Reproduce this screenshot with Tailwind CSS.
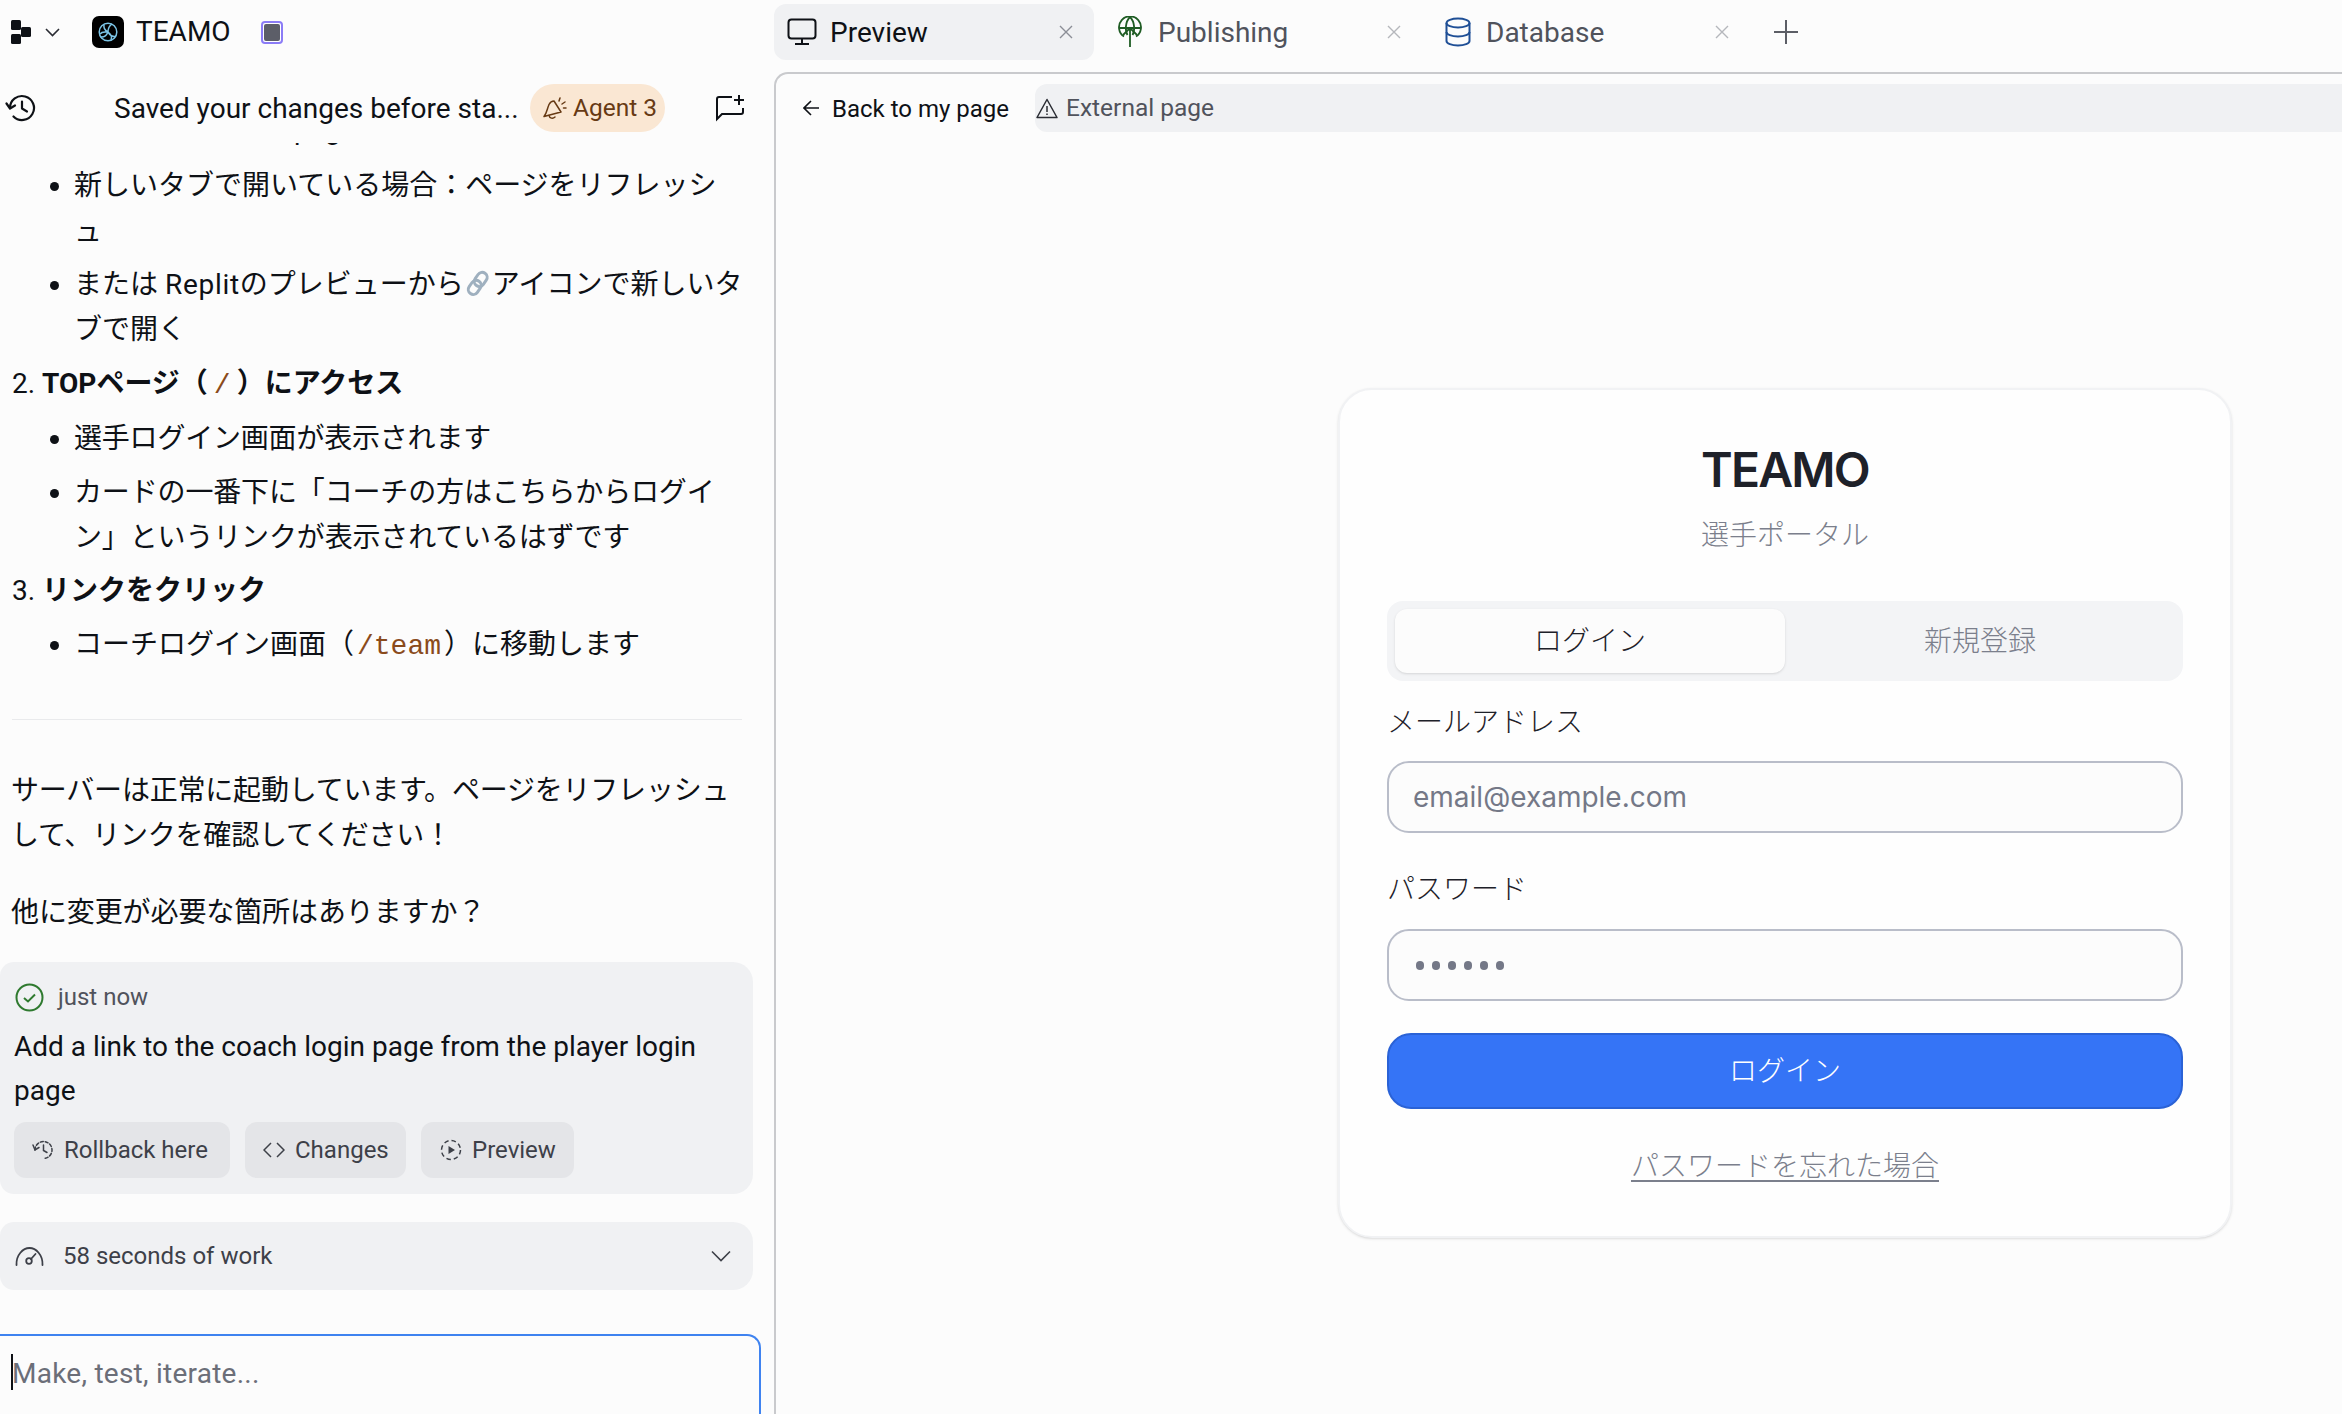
<!doctype html>
<html lang="ja">
<head>
<meta charset="utf-8">
<title>TEAMO</title>
<script src="https://cdn.jsdelivr.net/npm/@tailwindcss/browser@4"></script>
</head>
<body class="bg-[#fcfcfc]">
<div class="flex w-[2342px] h-[1414px] overflow-hidden bg-[#fcfcfc] text-[#0e1116] font-['Roboto','Noto_Sans_CJK_JP',sans-serif] text-[28px]">

  <!-- Left column -->
  <div class="w-[774px] shrink-0 flex flex-col h-full">
    <div class="h-[64px] flex items-center shrink-0">
      <svg class="ml-[11px] w-[20px] h-[24px]" viewBox="0 0 20 24" fill="#0e1116"><rect x="0" y="0" width="10" height="10" rx="1.500"/><rect x="10" y="7" width="10" height="10" rx="1.500"/><rect x="0" y="14" width="10" height="10" rx="1.500"/></svg>
      <svg class="ml-[14px] w-[15px] h-[9px]" viewBox="0 0 15 9" fill="none" stroke="#2a2c33" stroke-width="1.6"><path d="M1 1l6.500 6.500L14 1"/></svg>
      <div class="ml-[32px] w-[32px] h-[32px] rounded-[7px] bg-black flex items-center justify-center">
        <svg class="w-[20px] h-[20px]" viewBox="0 0 20 20" fill="none" stroke="#7cc4e6" stroke-width="1.5"><circle cx="10" cy="10" r="8.800"/><path d="M10 10c0-3 1-6 4-8M10 10c-3 0-6-1-8 2M10 10c1.500 2.500 4 5 8 4.500M6 2.500c-.5 3 1 6 4 7.500M2.500 15c3 .5 6-1.500 7.500-5M13 18c1-2.500 0-6-3-8"/></svg>
      </div>
      <span class="ml-[12px] text-[28px]">TEAMO</span>
      <div class="ml-[30px] w-[22px] h-[23px] rounded-[4px] border-2 border-[#8b7cf6] bg-white p-[1px]"><div class="w-full h-full rounded-[2px] bg-[#5c5e68]"></div></div>
    </div>

    <div class="mt-[20px] h-[48px] flex items-center shrink-0 relative">
      <svg class="ml-[5px] w-[32px] h-[28px]" viewBox="0 0 32 28" fill="none" stroke="#0e1116" stroke-width="2.200" stroke-linecap="round" stroke-linejoin="round"><path d="M5 14a12 12 0 1 1 3.500 8.500"/><path d="M1.500 9.500 5 14.500l5-3"/><path d="M17 7.500V14.500l5 3"/></svg>
      <span class="ml-[77px] mt-[2px] w-[406px] whitespace-nowrap">Saved your changes before sta...</span>
      <div class="ml-[10px] w-[135px] h-[48px] rounded-full bg-[#fae7d3] flex items-center text-[#673a14] text-[24.500px]">
        <svg class="ml-[12px] w-[26px] h-[26px]" viewBox="0 0 26 26" fill="none" stroke="#673a14" stroke-width="1.500" stroke-linejoin="round" stroke-linecap="round"><path d="M12 6 19 17 2 21.500C5 18 5 14 7 9.500 8 7.500 10 6 12 6z"/><path d="M7 20.500c.5 3 4 3.500 6 1.500"/><path d="M17 6l1-3M20 9l3-2M21.500 13h2.500"/></svg>
        <span class="ml-[5px] mt-[1px] whitespace-nowrap">Agent 3</span>
      </div>
      <svg class="ml-[50px] w-[30px] h-[28px]" viewBox="0 0 30 28" fill="none" stroke="#0e1116" stroke-width="2" stroke-linejoin="miter"><path d="M17 3H4a2 2 0 0 0-2 2v20l5-5h19a2 2 0 0 0 2-2v-4"/><path d="M24 1v10M19 6h10"/></svg>
    </div>

    <!-- Chat -->
    <div class="mt-[11px] h-[1191px] shrink-0 overflow-hidden">
      <div class="-mt-[36px] leading-[45px] pl-[12px] pr-[20px]">
        <div class="pl-[30px] -indent-[30px] whitespace-nowrap"><span>1. </span><span>ブラウザでアプリのpageに</span><b class="font-bold">最新状態を確認</b></div>
        <ul class="list-disc pl-[62px] -mr-[10px]">
          <li class="mt-[11px] leading-[46px]">新しいタブで開いている場合：ページをリフレッシ<br>ュ</li>
          <li class="mt-[7px]">または <span class="tracking-[0.7px]">Replit</span>のプレビューから<svg class="inline-block align-[-3px] w-[28px] h-[28px]" viewBox="0 0 28 28" fill="none" stroke="#9fb0bf" stroke-width="3"><rect x="12" y="3" width="10" height="15" rx="5" transform="rotate(35 17 10)"/><rect x="6" y="11" width="10" height="15" rx="5" transform="rotate(35 11 18)"/></svg>アイコンで新しいタ<br>ブで開く</li>
        </ul>
        <div class="mt-[9px] whitespace-nowrap"><span>2. </span><b class="font-bold">TOPページ（<code class="font-['Liberation_Mono',monospace] font-normal text-[#8a4b1b] px-[6px]">/</code>）にアクセス</b></div>
        <ul class="list-disc pl-[62px] -mr-[10px]">
          <li class="mt-[8px] tracking-[-0.2px]">選手ログイン画面が表示されます</li>
          <li class="mt-[9px] tracking-[-0.15px]">カードの一番下に「コーチの方はこちらからログイ<br>ン」というリンクが表示されているはずです</li>
        </ul>
        <div class="mt-[8px] whitespace-nowrap"><span>3. </span><b class="font-bold">リンクをクリック</b></div>
        <ul class="list-disc pl-[62px]">
          <li class="mt-[9px]">コーチログイン画面（<code class="font-['Liberation_Mono',monospace] text-[#8a4b1b] px-[3px]">/team</code>）に移動します</li>
        </ul>
        <div class="mt-[50px] h-[1px] w-[730px] bg-[#e9eaec]"></div>
        <p class="mt-[48px] -ml-[1px] tracking-[-0.2px]">サーバーは正常に起動しています。ページをリフレッシュ<br>して、リンクを確認してください！</p>
        <p class="mt-[32px] -ml-[1px] tracking-[-0.1px]">他に変更が必要な箇所はありますか？</p>
      </div>

      <div class="mt-[27px] w-[753px] h-[232px] bg-[#f0f1f3] rounded-r-[20px] rounded-l-[14px] pt-[20px] px-[14px]">
        <div class="flex items-center h-[30px]">
          <svg class="ml-[1px] w-[29px] h-[29px]" viewBox="0 0 29 29" fill="none" stroke="#2f7a2f" stroke-width="2"><circle cx="14.500" cy="14.500" r="13"/><path d="M9 15l4 3.500 7-7"/></svg>
          <span class="ml-[14px] text-[24px] text-[#50535c]">just now</span>
        </div>
        <p class="mt-[13px] leading-[44px]">Add a link to the coach login page from the player login<br>page</p>
        <div class="mt-[9px] flex gap-[15px] text-[24px] text-[#3d4048]">
          <div class="w-[216px] h-[56px] rounded-[12px] bg-[#e4e5e8] flex items-center">
            <svg class="ml-[18px] w-[22px] h-[22px]" viewBox="0 0 22 22" fill="none" stroke="#3d4048" stroke-width="1.500" stroke-linecap="round"><path d="M3 11a8.500 8.500 0 1 1 8.500 8.500" stroke-dasharray="3 2"/><path d="M1 6l2 5 4-2.500"/><path d="M11.500 6v5.500l3.500 2"/></svg>
            <span class="ml-[10px] whitespace-nowrap">Rollback here</span>
          </div>
          <div class="w-[161px] h-[56px] rounded-[12px] bg-[#e4e5e8] flex items-center">
            <svg class="ml-[18px] w-[22px] h-[16px]" viewBox="0 0 22 16" fill="none" stroke="#3d4048" stroke-width="1.500"><path d="M8 1 1 8l7 7M14 1l7 7-7 7"/></svg>
            <span class="ml-[10px] whitespace-nowrap">Changes</span>
          </div>
          <div class="w-[153px] h-[56px] rounded-[12px] bg-[#e4e5e8] flex items-center">
            <svg class="ml-[19px] w-[22px] h-[22px]" viewBox="0 0 22 22" fill="none" stroke="#3d4048" stroke-width="1.500"><circle cx="11" cy="11" r="9.500" stroke-dasharray="4.500 3"/><path d="M8.500 7 15 11l-6.500 4z" fill="#3d4048" stroke="none"/></svg>
            <span class="ml-[10px] whitespace-nowrap">Preview</span>
          </div>
        </div>
      </div>

      <div class="mt-[28px] w-[753px] h-[68px] bg-[#f0f1f3] rounded-r-[20px] rounded-l-[14px] flex items-center text-[24px] text-[#3d4048]">
        <svg class="ml-[15px] w-[29px] h-[20px]" viewBox="0 0 29 20" fill="none" stroke="#3d4048" stroke-width="1.800" stroke-linecap="round"><path d="M1.500 19C1 9 8 2 14.500 2S28 9 27.500 19"/><circle cx="14" cy="15" r="2.800"/><path d="M16 13l4.500-5"/></svg>
        <span class="ml-[19px] whitespace-nowrap">58 seconds of work</span>
        <svg class="ml-auto mr-[22px] w-[20px] h-[12px]" viewBox="0 0 20 12" fill="none" stroke="#3d4048" stroke-width="1.600"><path d="M1 1.500l9 9 9-9"/></svg>
      </div>
    </div>

    <!-- Input -->
    <div class="w-[761px] h-[80px] shrink-0 border-t-2 border-r-2 border-[#3f83f0] rounded-tr-[14px] pt-[18px] pl-[11px] flex items-start">
      <div class="w-[2px] h-[36px] bg-[#0e1116] shrink-0"></div>
      <span class="-ml-[1px] leading-[46px] -mt-[3px] tracking-[0.25px] text-[#6b6e78] whitespace-nowrap">Make, test, iterate...</span>
    </div>
  </div>

  <!-- Right column -->
  <div class="flex-1 flex flex-col h-full min-w-0">
    <div class="h-[72px] shrink-0 pt-[4px] flex gap-[8px] items-start">
      <div class="w-[320px] h-[56px] rounded-[12px] bg-[#f0f1f3] flex items-center relative">
        <svg class="ml-[13px] w-[30px] h-[28px]" viewBox="0 0 30 28" fill="none" stroke="#0e1116" stroke-width="2"><rect x="1.500" y="1.500" width="27" height="19" rx="3"/><path d="M15 21v5M8 26h14"/></svg>
        <span class="ml-[13px] mt-[1px]">Preview</span>
        <svg class="absolute right-[21px] top-[21px] w-[14px] h-[14px]" viewBox="0 0 14 14" stroke="#8b8e96" stroke-width="1.400"><path d="M1 1l12 12M13 1 1 13"/></svg>
      </div>
      <div class="w-[320px] h-[56px] rounded-[12px] flex items-center relative">
        <svg class="ml-[16px] w-[24px] h-[32px]" viewBox="0 0 24 32" fill="none" stroke="#1f5c24" stroke-width="1.800"><path d="M6 20.500A11 11 0 1 1 18 20.500"/><path d="M1 12h22M12 1c-5 5-5 14-2.500 18M12 1c5 5 5 14 2.500 18"/><path d="M12 31V12M5 19l7-7 7 7"/></svg>
        <span class="ml-[16px] mt-[1px] text-[#50535c]">Publishing</span>
        <svg class="absolute right-[21px] top-[21px] w-[14px] h-[14px]" viewBox="0 0 14 14" stroke="#b5b7bc" stroke-width="1.400"><path d="M1 1l12 12M13 1 1 13"/></svg>
      </div>
      <div class="w-[320px] h-[56px] rounded-[12px] flex items-center relative">
        <svg class="ml-[15px] w-[26px] h-[30px]" viewBox="0 0 26 30" fill="none" stroke="#1f4f96" stroke-width="2"><ellipse cx="13" cy="6" rx="11.500" ry="4.500"/><path d="M1.500 6v18c0 2.500 5 4.500 11.500 4.500S24.500 26.500 24.500 24V6"/><path d="M1.500 15c0 2.500 5 4.500 11.500 4.500S24.500 17.500 24.500 15"/></svg>
        <span class="ml-[15px] mt-[1px] text-[#50535c]">Database</span>
        <svg class="absolute right-[21px] top-[21px] w-[14px] h-[14px]" viewBox="0 0 14 14" stroke="#b5b7bc" stroke-width="1.400"><path d="M1 1l12 12M13 1 1 13"/></svg>
      </div>
      <svg class="ml-[16px] mt-[16px] w-[24px] h-[24px]" viewBox="0 0 24 24" stroke="#5c5e66" stroke-width="2"><path d="M12 0v24M0 12h24"/></svg>
    </div>

    <div class="flex-1 border-t-2 border-l-2 border-[#c9cacd] rounded-tl-[14px] min-h-0">
      <div class="mt-[10px] h-[48px] flex items-center">
        <svg class="ml-[27px] w-[16px] h-[16px]" viewBox="0 0 16 16" fill="none" stroke="#0e1116" stroke-width="1.600"><path d="M8 1 1 8l7 7M1 8h15"/></svg>
        <span class="ml-[13px] mt-[1px] w-[178px] text-[24px] whitespace-nowrap">Back to my page</span>
        <div class="ml-[25px] flex-1 h-[48px] bg-[#f0f1f3] rounded-l-[12px] flex items-center text-[#50535c] text-[24.500px]">
          <svg class="ml-[1px] w-[22px] h-[21px]" viewBox="0 0 22 21" fill="none" stroke="#2a2c33" stroke-width="1.500" stroke-linejoin="round"><path d="M11 1.500 21 19.500H1z"/><path d="M11 8v6M11 15.500v1.500"/></svg>
          <span class="ml-[8px] mt-[1px] whitespace-nowrap">External page</span>
        </div>
      </div>

      <!-- Login card -->
      <div class="ml-[562px] mt-[256px] w-[894px] h-[850px] rounded-[34px] border-2 border-[#f1f2f4] bg-[#fefefe] shadow-sm px-[47px] font-['Inter','Noto_Sans_CJK_JP',sans-serif] font-light">
        <div class="mt-[51px] text-center text-[48px] leading-[58px] font-semibold tracking-[-1.800px] text-[#1e2129]">TEAMO</div>
        <div class="mt-[15px] text-center leading-[42px] text-[#7b7f8c]">選手ポータル</div>
        <div class="mt-[45px] h-[80px] rounded-[16px] bg-[#f3f4f6] p-[8px] flex">
          <div class="w-[390px] rounded-[12px] bg-[#fcfcfc] shadow-sm flex items-center justify-center text-[#1e2129]">ログイン</div>
          <div class="flex-1 flex items-center justify-center text-[#7b7f8c]">新規登録</div>
        </div>
        <div class="mt-[20px] leading-[42px] text-[#1e2129]">メールアドレス</div>
        <div class="mt-[18px] h-[72px] rounded-[22px] border-2 border-[#b9bdc9] bg-[#fcfcfc] pl-[24px] flex items-center text-[#747887] font-normal text-[28px]">email@example.com</div>
        <div class="mt-[35px] leading-[42px] text-[#1e2129]">パスワード</div>
        <div class="mt-[19px] h-[72px] rounded-[22px] border-2 border-[#b9bdc9] bg-[#fcfcfc] pl-[27px] flex items-center gap-[8px]">
          <span class="w-[8px] h-[9px] rounded-full bg-[#747887]"></span><span class="w-[8px] h-[9px] rounded-full bg-[#747887]"></span><span class="w-[8px] h-[9px] rounded-full bg-[#747887]"></span><span class="w-[8px] h-[9px] rounded-full bg-[#747887]"></span><span class="w-[8px] h-[9px] rounded-full bg-[#747887]"></span><span class="w-[8px] h-[9px] rounded-full bg-[#747887]"></span>
        </div>
        <div class="mt-[32px] h-[76px] rounded-[24px] bg-[#3574f6] border-2 border-[#2a62d6] flex items-center justify-center text-white">ログイン</div>
        <div class="mt-[36px] text-center leading-[42px] text-[#7b7f8c] underline underline-offset-[4px]">パスワードを忘れた場合</div>
      </div>
    </div>
  </div>
</div>
</body>
</html>
